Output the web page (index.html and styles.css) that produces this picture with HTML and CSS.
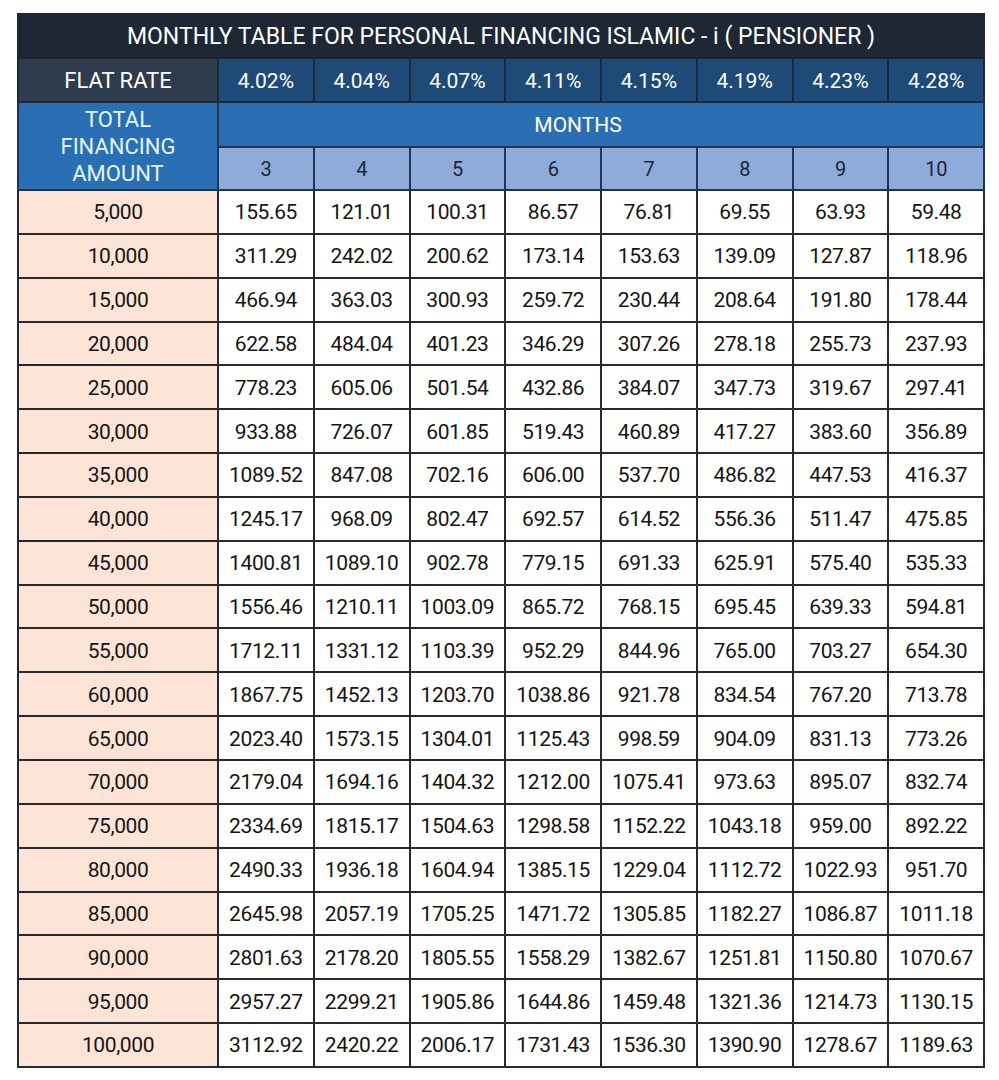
FILE: index.html
```html
<!DOCTYPE html>
<html>
<head>
<meta charset="utf-8">
<link rel="stylesheet" href="styles.css">
</head>
<body>
<table class="rate-table">
<colgroup>
<col class="c-first"><col class="c-m"><col class="c-m"><col class="c-m"><col class="c-m"><col class="c-m"><col class="c-m"><col class="c-m"><col class="c-m">
</colgroup>
<thead>
<tr class="r-title"><th colspan="9">MONTHLY TABLE FOR PERSONAL FINANCING ISLAMIC - i ( PENSIONER )</th></tr>
<tr class="r-rate"><th class="flat">FLAT RATE</th><th>4.02%</th><th>4.04%</th><th>4.07%</th><th>4.11%</th><th>4.15%</th><th>4.19%</th><th>4.23%</th><th>4.28%</th></tr>
<tr class="r-months"><th class="total" rowspan="2">TOTAL<br>FINANCING<br>AMOUNT</th><th class="months" colspan="8">MONTHS</th></tr>
<tr class="r-nums"><th>3</th><th>4</th><th>5</th><th>6</th><th>7</th><th>8</th><th>9</th><th>10</th></tr>
</thead>
<tbody>
<tr><th>5,000</th><td>155.65</td><td>121.01</td><td>100.31</td><td>86.57</td><td>76.81</td><td>69.55</td><td>63.93</td><td>59.48</td></tr>
<tr><th>10,000</th><td>311.29</td><td>242.02</td><td>200.62</td><td>173.14</td><td>153.63</td><td>139.09</td><td>127.87</td><td>118.96</td></tr>
<tr><th>15,000</th><td>466.94</td><td>363.03</td><td>300.93</td><td>259.72</td><td>230.44</td><td>208.64</td><td>191.80</td><td>178.44</td></tr>
<tr><th>20,000</th><td>622.58</td><td>484.04</td><td>401.23</td><td>346.29</td><td>307.26</td><td>278.18</td><td>255.73</td><td>237.93</td></tr>
<tr><th>25,000</th><td>778.23</td><td>605.06</td><td>501.54</td><td>432.86</td><td>384.07</td><td>347.73</td><td>319.67</td><td>297.41</td></tr>
<tr><th>30,000</th><td>933.88</td><td>726.07</td><td>601.85</td><td>519.43</td><td>460.89</td><td>417.27</td><td>383.60</td><td>356.89</td></tr>
<tr><th>35,000</th><td>1089.52</td><td>847.08</td><td>702.16</td><td>606.00</td><td>537.70</td><td>486.82</td><td>447.53</td><td>416.37</td></tr>
<tr><th>40,000</th><td>1245.17</td><td>968.09</td><td>802.47</td><td>692.57</td><td>614.52</td><td>556.36</td><td>511.47</td><td>475.85</td></tr>
<tr><th>45,000</th><td>1400.81</td><td>1089.10</td><td>902.78</td><td>779.15</td><td>691.33</td><td>625.91</td><td>575.40</td><td>535.33</td></tr>
<tr><th>50,000</th><td>1556.46</td><td>1210.11</td><td>1003.09</td><td>865.72</td><td>768.15</td><td>695.45</td><td>639.33</td><td>594.81</td></tr>
<tr><th>55,000</th><td>1712.11</td><td>1331.12</td><td>1103.39</td><td>952.29</td><td>844.96</td><td>765.00</td><td>703.27</td><td>654.30</td></tr>
<tr><th>60,000</th><td>1867.75</td><td>1452.13</td><td>1203.70</td><td>1038.86</td><td>921.78</td><td>834.54</td><td>767.20</td><td>713.78</td></tr>
<tr><th>65,000</th><td>2023.40</td><td>1573.15</td><td>1304.01</td><td>1125.43</td><td>998.59</td><td>904.09</td><td>831.13</td><td>773.26</td></tr>
<tr><th>70,000</th><td>2179.04</td><td>1694.16</td><td>1404.32</td><td>1212.00</td><td>1075.41</td><td>973.63</td><td>895.07</td><td>832.74</td></tr>
<tr><th>75,000</th><td>2334.69</td><td>1815.17</td><td>1504.63</td><td>1298.58</td><td>1152.22</td><td>1043.18</td><td>959.00</td><td>892.22</td></tr>
<tr><th>80,000</th><td>2490.33</td><td>1936.18</td><td>1604.94</td><td>1385.15</td><td>1229.04</td><td>1112.72</td><td>1022.93</td><td>951.70</td></tr>
<tr><th>85,000</th><td>2645.98</td><td>2057.19</td><td>1705.25</td><td>1471.72</td><td>1305.85</td><td>1182.27</td><td>1086.87</td><td>1011.18</td></tr>
<tr><th>90,000</th><td>2801.63</td><td>2178.20</td><td>1805.55</td><td>1558.29</td><td>1382.67</td><td>1251.81</td><td>1150.80</td><td>1070.67</td></tr>
<tr><th>95,000</th><td>2957.27</td><td>2299.21</td><td>1905.86</td><td>1644.86</td><td>1459.48</td><td>1321.36</td><td>1214.73</td><td>1130.15</td></tr>
<tr><th>100,000</th><td>3112.92</td><td>2420.22</td><td>2006.17</td><td>1731.43</td><td>1536.30</td><td>1390.90</td><td>1278.67</td><td>1189.63</td></tr>
</tbody>
</table>
</body>
</html>
```
FILE: styles.css
```css
html, body {
  margin: 0;
  padding: 0;
  background: #ffffff;
}
body {
  padding: 13px 0 0 17px;
  font-family: Roboto, "Liberation Sans", sans-serif;
}
.rate-table {
  border-collapse: collapse;
  table-layout: fixed;
  width: 966px;
}
.c-first { width: 200px; }
.c-m { width: 95.75px; }
.rate-table th,
.rate-table td {
  border: 2px solid #262a30;
  padding: 1px 0 0 0;
  text-align: center;
  vertical-align: middle;
  font-weight: 400;
  font-size: 21px;
  letter-spacing: -0.4px;
  color: #141414;
  white-space: nowrap;
}
.rate-table tbody tr { height: 43.85px; }
.rate-table tbody th { background: #fde4d7; }
.rate-table tbody td { background: #ffffff; }

.r-title th {
  background: #1e2835;
  color: #ffffff;
  font-size: 23px;
  letter-spacing: 0;
  height: 41px;
  border-color: #1e2835;
  border-bottom-color: #1a2230;
}
.r-rate th {
  background: #1d4a77;
  color: #ffffff;
  font-size: 21px;
  letter-spacing: 0;
  height: 41px;
  border-color: #1c2a3a;
}
.r-rate th.flat {
  background: #2e3c4e;
  font-size: 22px;
}
.r-months th {
  background: #2a6fb4;
  color: #ffffff;
  font-size: 21px;
  letter-spacing: 0;
  height: 42px;
  border-color: #1f3550;
}
.r-months th.months {
  padding-right: 46px;
}
.r-months th.total {
  color: #e3f4ff;
  line-height: 27px;
  font-size: 22px;
}
.r-nums th {
  background: #8eabdc;
  color: #1c2633;
  font-size: 20px;
  height: 40px;
  border-color: #1f3550;
}
```
